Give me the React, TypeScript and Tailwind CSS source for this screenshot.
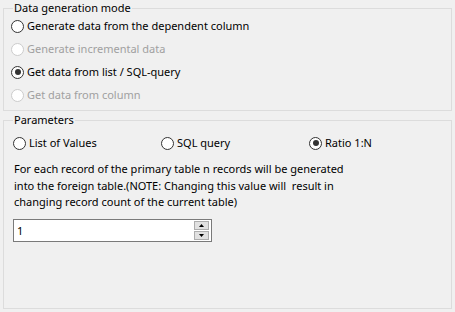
import React, { useState } from 'react';

interface RadioProps {
  label: string;
  checked?: boolean;
  disabled?: boolean;
  onSelect?: () => void;
}

const Radio: React.FC<RadioProps> = ({ label, checked, disabled, onSelect }) => (
  <label
    className={`flex items-center h-[18px] gap-[3px] select-none ${disabled ? 'text-[#a0a0a0]' : 'text-black'}`}
    onClick={() => !disabled && onSelect?.()}
  >
    <span
      className={`w-[13px] h-[13px] rounded-full border bg-white flex items-center justify-center flex-shrink-0 ${
        disabled ? 'border-[#cccccc]' : 'border-[#333333]'
      }`}
    >
      {checked && <span className="w-[6px] h-[6px] rounded-full bg-[#333333]" />}
    </span>
    <span className="leading-[18px]">{label}</span>
  </label>
);

const App: React.FC = () => {
  const [mode, setMode] = useState('list');
  const [param, setParam] = useState('ratio');
  const [count, setCount] = useState(1);

  return (
    <div
      className="w-[455px] h-[312px] bg-[#f0f0f0] px-[3px] text-[11px] text-black overflow-hidden"
      style={{ fontFamily: '"Noto Sans", "Open Sans", sans-serif' }}
    >
      {/* Data generation mode */}
      <fieldset className="w-[449px] h-[111px] border border-[#dcdcdc] pl-[9px]">
        <legend className="px-[1px] leading-[16px]">Data generation mode</legend>
        <div className="flex flex-col gap-[5px] -ml-[2px] mt-[1px]">
          <Radio label="Generate data from the dependent column" checked={mode === 'dep'} onSelect={() => setMode('dep')} />
          <Radio label="Generate incremental data" disabled />
          <Radio label="Get data from list / SQL-query" checked={mode === 'list'} onSelect={() => setMode('list')} />
          <Radio label="Get data from column" disabled />
        </div>
      </fieldset>

      {/* Parameters */}
      <fieldset className="w-[449px] h-[197px] mt-px border border-[#dcdcdc] pl-[9px]">
        <legend className="px-[1px] leading-[16px]">Parameters</legend>
        <div className="flex mt-[6px]">
          <div className="w-[148px]">
            <Radio label="List of Values" checked={param === 'values'} onSelect={() => setParam('values')} />
          </div>
          <div className="w-[148px]">
            <Radio label="SQL query" checked={param === 'sql'} onSelect={() => setParam('sql')} />
          </div>
          <div>
            <Radio label="Ratio 1:N" checked={param === 'ratio'} onSelect={() => setParam('ratio')} />
          </div>
        </div>

        <p className="mt-[9px] ml-px leading-[16.5px] whitespace-pre">
          For each record of the primary table n records will be generated
          <br />
          into the foreign table.(NOTE: Changing this value will  result in
          <br />
          changing record count of the current table)
        </p>

        <div className="mt-[8px] w-[199px] h-[23px] border border-[#7a7a7a] bg-white flex items-center">
          <input
            value={count}
            onChange={(e) => setCount(Number(e.target.value) || 0)}
            className="flex-1 min-w-0 h-full pl-[3px] outline-none bg-transparent"
          />
          <div className="flex flex-col gap-px mr-[2px]">
            <button
              className="w-[15px] h-[9px] bg-[#e1e1e1] border border-[#adadad] flex items-center justify-center"
              onClick={() => setCount(count + 1)}
            >
              <svg width="5" height="3" viewBox="0 0 5 3">
                <path d="M2.5 0L5 3H0z" fill="#000" />
              </svg>
            </button>
            <button
              className="w-[15px] h-[9px] bg-[#e1e1e1] border border-[#adadad] flex items-center justify-center"
              onClick={() => setCount(Math.max(0, count - 1))}
            >
              <svg width="5" height="3" viewBox="0 0 5 3">
                <path d="M0 0H5L2.5 3z" fill="#000" />
              </svg>
            </button>
          </div>
        </div>
      </fieldset>
    </div>
  );
};

export default App;
